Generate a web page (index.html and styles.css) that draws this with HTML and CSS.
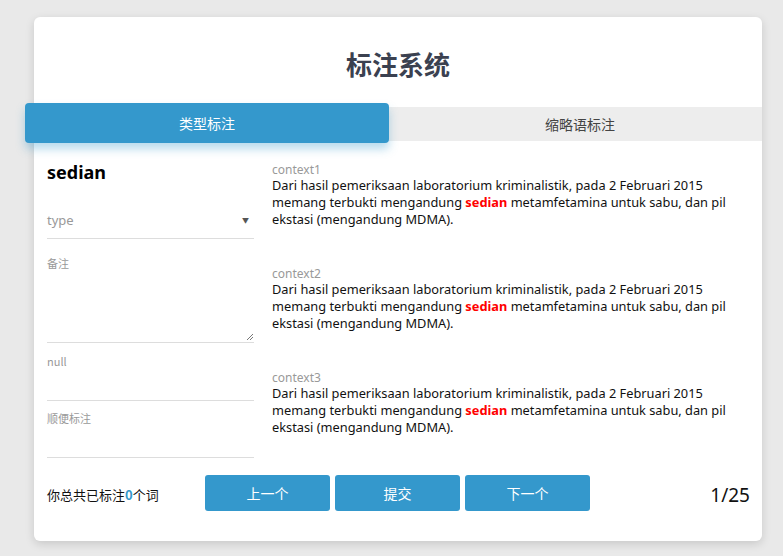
FILE: index.html
```html
<!DOCTYPE html>
<html lang="zh">
<head>
<meta charset="utf-8">
<title>标注系统</title>
<link rel="stylesheet" href="styles.css">
</head>
<body>
<div class="card">
  <h1 class="title">标注系统</h1>
  <div class="tabs">
    <div class="tab tab-active">类型标注</div>
    <div class="tab">缩略语标注</div>
  </div>
  <div class="main">
    <div class="left">
      <div class="word">sedian</div>
      <div class="select">
        <span class="select-text">type</span>
        <span class="select-arrow">▼</span>
      </div>
      <div class="field">
        <div class="label">备注</div>
        <div class="textarea"><svg class="grip" width="8" height="8" viewBox="0 0 8 8"><path d="M7 1L1 7M7 4L4 7" stroke="#777" stroke-width="1" fill="none"/></svg></div>
      </div>
      <div class="field field-2">
        <div class="label">null</div>
        <div class="input"></div>
      </div>
      <div class="field field-3">
        <div class="label">顺便标注</div>
        <div class="input"></div>
      </div>
    </div>
    <div class="right">
      <div class="ctx">
        <div class="ctx-label">context1</div>
        <p class="ctx-text">Dari hasil pemeriksaan laboratorium kriminalistik, pada 2 Februari 2015 memang terbukti mengandung <span class="hl">sedian</span> metamfetamina untuk sabu, dan pil ekstasi (mengandung MDMA).</p>
      </div>
      <div class="ctx">
        <div class="ctx-label">context2</div>
        <p class="ctx-text">Dari hasil pemeriksaan laboratorium kriminalistik, pada 2 Februari 2015 memang terbukti mengandung <span class="hl">sedian</span> metamfetamina untuk sabu, dan pil ekstasi (mengandung MDMA).</p>
      </div>
      <div class="ctx">
        <div class="ctx-label">context3</div>
        <p class="ctx-text">Dari hasil pemeriksaan laboratorium kriminalistik, pada 2 Februari 2015 memang terbukti mengandung <span class="hl">sedian</span> metamfetamina untuk sabu, dan pil ekstasi (mengandung MDMA).</p>
      </div>
    </div>
  </div>
  <div class="footer">
    <div class="count">你总共已标注<span class="num">0</span>个词</div>
    <div class="buttons">
      <button class="btn">上一个</button>
      <button class="btn">提交</button>
      <button class="btn">下一个</button>
    </div>
    <div class="page">1/25</div>
  </div>
</div>
</body>
</html>
```

FILE: styles.css
```css
* { box-sizing: border-box; }
html, body { margin: 0; padding: 0; }
body {
  background: #e9e9e9;
  font-family: "Noto Sans", "Noto Sans CJK SC", sans-serif;
  color: #111;
  width: 783px;
  height: 556px;
  overflow: hidden;
}
.card {
  margin: 17px 0 0 34px;
  width: 728px;
  height: 524px;
  background: #fff;
  border-radius: 6px;
  box-shadow: 0 3px 10px rgba(0,0,0,0.14);
  display: flex;
  flex-direction: column;
}
.title {
  margin: 0;
  padding: 29px 0 25px;
  height: 90px;
  text-align: center;
  font-family: "Noto Sans CJK SC", sans-serif;
  font-size: 26px;
  line-height: 36px;
  font-weight: 700;
  color: #3b4150;
}
.tabs {
  display: flex;
  height: 34px;
  background: #ededed;
}
.tab {
  flex: 1;
  text-align: center;
  font-family: "Noto Sans CJK SC", sans-serif;
  font-size: 14px;
  line-height: 34px;
  color: #444;
}
.tab-active {
  background: #3498cc;
  color: #fff;
  margin: -4px 9px -2px -9px;
  line-height: 40px;
  border-radius: 4px;
  box-shadow: 0 6px 10px rgba(52,152,204,0.35);
  position: relative;
  z-index: 1;
}
.main {
  display: flex;
  padding: 0 12px 0 13px;
  gap: 18px;
}
.left {
  width: 207px;
  flex: none;
  padding-top: 19px;
}
.word {
  font-size: 18px;
  line-height: 24px;
  font-weight: 700;
  color: #000;
}
.select {
  margin-top: 24px;
  height: 31px;
  border-bottom: 1px solid #ddd;
  display: flex;
  align-items: center;
  justify-content: space-between;
  padding: 0 5px 6px 0;
}
.select-text {
  font-size: 13px;
  color: #999;
}
.select-arrow {
  font-size: 7px;
  color: #555;
}
.field { margin-top: 16px; }
.field-2 { margin-top: 10px; }
.field-3 { margin-top: 9px; }
.label {
  font-family: "Noto Sans CJK SC", sans-serif;
  font-size: 11px;
  line-height: 16px;
  color: #999;
}
.textarea {
  height: 72px;
  border-bottom: 1px solid #ddd;
  position: relative;
}
.grip {
  position: absolute;
  right: 0;
  bottom: 1px;
}
.input {
  height: 32px;
  border-bottom: 1px solid #ddd;
}
.right {
  flex: 1;
  padding-top: 22px;
}
.ctx { margin-bottom: 39px; }
.ctx-label {
  font-size: 12px;
  line-height: 14px;
  color: #999;
}
.ctx-text {
  margin: 0;
  font-size: 12.8px;
  line-height: 17px;
  color: #111;
}
.hl { color: #f00; font-weight: 700; display: inline-block; line-height: 17px; }
.footer {
  margin-top: auto;
  margin-bottom: 31px;
  display: flex;
  align-items: center;
  padding: 0 12px 0 13px;
}
.count {
  width: 158px;
  font-family: "Noto Sans CJK SC", sans-serif;
  font-size: 13px;
  color: #111;
  padding-top: 2px;
}
.num { color: #3498cc; font-weight: 700; }
.buttons {
  display: flex;
  gap: 5px;
}
.btn {
  width: 125px;
  height: 36px;
  border: none;
  border-radius: 3px;
  background: #3498cc;
  color: #fff;
  font-family: "Noto Sans CJK SC", sans-serif;
  font-size: 14px;
}
.page {
  margin-left: auto;
  font-size: 19px;
  color: #111;
  padding-top: 4px;
}
```
